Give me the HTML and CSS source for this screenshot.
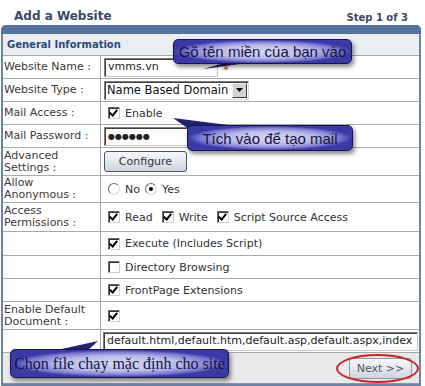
FILE: index.html
```html
<!DOCTYPE html>
<html lang="vi">
<head>
  <meta charset="UTF-8">
  <title>Add a Website</title>
  <link rel="stylesheet" href="styles.css">
</head>
<body>
<div class="page">

  <!-- Cabecera -->
  <div class="top">
    <h1 class="title">Add a Website</h1>
    <span class="step">Step 1 of 3</span>
  </div>

  <div class="panel">
    <div class="panel-bar"></div>
    <div class="section">General Information</div>

    <div class="row">
      <div class="label">Website Name :</div>
      <div class="value"><span class="field name-field">vmms.vn</span><span class="req">*</span></div>
    </div>
    <div class="row">
      <div class="label">Website Type :</div>
      <div class="value">
        <span class="select">Name Based Domain<span class="arrow"><svg width="7" height="4" viewBox="0 0 7 4"><path d="M0 0h7L3.5 4z" fill="#000"/></svg></span></span>
      </div>
    </div>
    <div class="row">
      <div class="label">Mail Access :</div>
      <div class="value"><span class="cb on"></span>Enable</div>
    </div>
    <div class="row">
      <div class="label">Mail Password :</div>
      <div class="value"><span class="field name-field pwd">&#9679;&#9679;&#9679;&#9679;&#9679;&#9679;</span></div>
    </div>
    <div class="row h28">
      <div class="label">Advanced<br>Settings :</div>
      <div class="value"><span class="btn configure">Configure</span></div>
    </div>
    <div class="row h27">
      <div class="label">Allow<br>Anonymous :</div>
      <div class="value"><span class="radio"></span>No<span class="radio on"></span>Yes</div>
    </div>
    <div class="row h29">
      <div class="label">Access<br>Permissions :</div>
      <div class="value"><span class="cb on"></span>Read<span class="cb on"></span>Write<span class="cb on"></span>Script Source Access</div>
    </div>
    <div class="row h24">
      <div class="label"></div>
      <div class="value"><span class="cb on"></span>Execute (Includes Script)</div>
    </div>
    <div class="row">
      <div class="label"></div>
      <div class="value"><span class="cb"></span>Directory Browsing</div>
    </div>
    <div class="row">
      <div class="label"></div>
      <div class="value"><span class="cb on"></span>FrontPage Extensions</div>
    </div>
    <div class="row h28">
      <div class="label">Enable Default<br>Document :</div>
      <div class="value"><span class="cb on"></span></div>
    </div>
    <div class="row">
      <div class="label"></div>
      <div class="value"><span class="field docs-field">default.html,default.htm,default.asp,default.aspx,index</span></div>
    </div>

    <div class="footer"><span class="btn next">Next &gt;&gt;</span></div>
  </div>

  <!-- Ghi chú -->
  <svg class="pointers" width="425" height="386" viewBox="0 0 425 386">
    <polygon points="203,69 232,61 262,61" fill="#1c1c66"/>
    <polygon points="173,118 252,128 196,134" fill="#22226e"/>
    <polygon points="98,341 48,352 86,352" fill="#22226e"/>
  </svg>
  <div class="note note-domain">Gõ tên miền của bạn vào</div>
  <div class="note note-mail">Tích vào để tạo mail</div>
  <div class="note note-file">Chọn file chạy mặc định cho site</div>
  <div class="ring"></div>

</div>
</body>
</html>
```
FILE: styles.css
```css
body {
  margin: 0;
  background-color: #fff;
  font-family: "DejaVu Sans", Verdana, sans-serif;
  font-size: 11px;
  color: #333;
}

.page {
  position: relative;
  width: 425px;
  height: 386px;
  overflow: hidden;
}

.top {
  display: flex;
  justify-content: space-between;
  align-items: flex-end;
  height: 24px;
  padding: 0 17px 0 14px;
}

.title {
  margin: 0 0 1px;
  font-size: 12px;
  font-weight: bold;
  color: #3b4966;
}

.step {
  margin-bottom: 1px;
  font-size: 10px;
  font-weight: bold;
  color: #3b4966;
}

/* Panel */
.panel {
  margin: 1px 4px 0 1px;
  border: 2px solid #6e82a4;
  border-top: none;
  border-radius: 5px 5px 0 0;
}

.panel-bar {
  height: 9px;
  margin: 0 -2px;
  background-color: #56739e;
  border-radius: 5px 5px 0 0;
}

.section {
  height: 21px;
  line-height: 21px;
  padding-left: 4px;
  background-color: #eaedf2;
  border-bottom: 1px solid #a9a9a9;
  font-size: 10px;
  font-weight: bold;
  color: #2c4a7b;
}

.row {
  display: flex;
  height: 22px;
  border-bottom: 1px solid #a9a9a9;
}

.row.h24 { height: 23px; }
.row.h27 { height: 26px; }
.row.h28 { height: 27px; }
.row.h29 { height: 28px; }

.label {
  width: 98px;
  box-sizing: border-box;
  padding-left: 1px;
  border-right: 1px solid #a9a9a9;
  display: flex;
  align-items: center;
  line-height: 12px;
  color: #3a3a3a;
}

.value {
  flex: 1;
  display: flex;
  align-items: center;
  padding-left: 3px;
  min-width: 0;
  white-space: nowrap;
}

/* Campos */
.field {
  display: block;
  box-sizing: border-box;
  height: 19px;
  line-height: 16px;
  padding-left: 3px;
  background-color: #fff;
  border: 1px solid #7b7b7b;
  border-right-color: #c8c8c8;
  border-bottom-color: #c8c8c8;
  box-shadow: inset 1px 1px 0 #404040;
  overflow: hidden;
  color: #222;
}

.name-field {
  width: 114px;
}

.pwd {
  font-size: 8px;
  line-height: 17px;
}

.docs-field {
  width: 315px;
  margin-left: -1px;
}

.req {
  margin: 5px 0 0 5px;
  color: #d04040;
  font-size: 12px;
}

.select {
  display: flex;
  align-items: center;
  box-sizing: border-box;
  width: 145px;
  height: 19px;
  padding-left: 2px;
  border: 1px solid #7b7b7b;
  border-right-color: #d8d8d8;
  border-bottom-color: #d8d8d8;
  box-shadow: inset 1px 1px 0 #404040;
  font-size: 11.5px;
  color: #111;
}

.arrow {
  margin-left: auto;
  width: 13px;
  height: 13px;
  margin-right: 1px;
  display: flex;
  align-items: center;
  justify-content: center;
  background-color: #d6d3ce;
  border: 1px solid;
  border-color: #f4f4f4 #404040 #404040 #f4f4f4;
}

/* Casillas */
.cb {
  position: relative;
  display: inline-block;
  width: 10px;
  height: 10px;
  margin: 0 5px 0 4px;
  background-color: #fff;
  border: 1px solid;
  border-color: #6a6a6a #d0d0d0 #d0d0d0 #6a6a6a;
  box-shadow: inset 1px 1px 0 #333;
}

.value .cb:not(:first-child) {
  margin-left: 9px;
}

.cb.on::after {
  content: "";
  position: absolute;
  left: 2px;
  top: 0;
  width: 3px;
  height: 6px;
  border: solid #000;
  border-width: 0 2.5px 2.5px 0;
  transform: rotate(40deg);
}

.radio {
  position: relative;
  display: inline-block;
  width: 10px;
  height: 10px;
  margin: 0 5px 0 4px;
  background-color: #fff;
  border: 1px solid;
  border-color: #6a6a6a #d8d8d8 #d8d8d8 #6a6a6a;
  border-radius: 50%;
}

.radio.on {
  margin-left: 5px;
}

.radio.on::after {
  content: "";
  position: absolute;
  left: 3px;
  top: 3px;
  width: 4px;
  height: 4px;
  border-radius: 50%;
  background-color: #000;
}

/* Botones */
.btn {
  display: inline-flex;
  align-items: center;
  justify-content: center;
  box-sizing: border-box;
  border: 1px solid #4a566a;
  border-radius: 3px;
  background: linear-gradient(#f7f8fa, #e3e7ee 50%, #cdd4df);
  color: #333;
}

.configure {
  width: 83px;
  height: 21px;
}

.footer {
  display: flex;
  justify-content: flex-end;
  align-items: center;
  height: 30px;
  padding-right: 7px;
  background-color: #e9e9e9;
  border-bottom: 1px solid #8a94a6;
}

.next {
  width: 63px;
  height: 21px;
  border-color: #8d98ab;
  color: #555;
}

/* Ghi chú */
.pointers {
  position: absolute;
  left: 0;
  top: 0;
}

.note {
  position: absolute;
  box-sizing: border-box;
  display: flex;
  align-items: center;
  justify-content: center;
  border: 1px solid #16164e;
  border-radius: 5px;
  background: radial-gradient(farthest-side, #d6d6f5 0%, #bcbcec 55%, #7a7ad0 85%, #3a3aa6 100%);
  box-shadow: 2px 3px 4px rgba(0, 0, 0, 0.45);
  font-family: "Liberation Sans", Arial, sans-serif;
  font-size: 15px;
  color: #14143c;
  white-space: nowrap;
}

.note-domain {
  left: 173px;
  top: 39px;
  width: 179px;
  height: 25px;
}

.note-mail {
  left: 187px;
  top: 125px;
  width: 166px;
  height: 26px;
}

.note-file {
  left: 10px;
  top: 349px;
  width: 219px;
  height: 29px;
  font-family: "Liberation Serif", "Times New Roman", serif;
  font-size: 16px;
}

.ring {
  position: absolute;
  left: 336px;
  top: 354px;
  width: 79px;
  height: 25px;
  border: 2px solid #c9262c;
  border-radius: 50%;
}
```
